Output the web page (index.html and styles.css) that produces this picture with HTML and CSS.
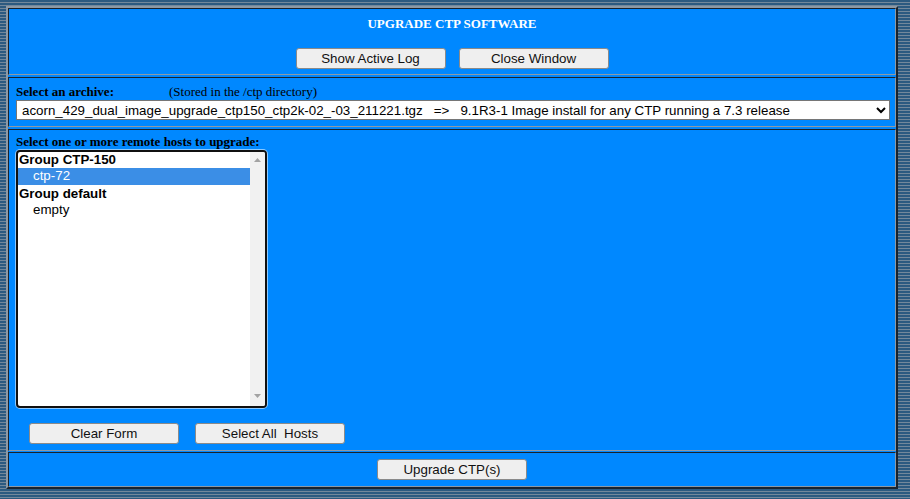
FILE: index.html
```html
<!DOCTYPE html>
<html lang="en">
<head>
<meta charset="utf-8">
<title>Upgrade CTP Software</title>
<link rel="stylesheet" href="styles.css">
</head>
<body>
<form class="frame">
  <section class="row row-head">
    <h1 class="title">UPGRADE CTP SOFTWARE</h1>
    <div class="btns btns-head">
      <button type="button" class="btn">Show Active Log</button>
      <button type="button" class="btn">Close Window</button>
    </div>
  </section>
  <section class="row row-archive">
    <div class="label-line"><b class="label-strong label-archive">Select an archive:</b><span class="note">(Stored in the /ctp directory)</span></div>
    <select class="archive">
      <option>acorn_429_dual_image_upgrade_ctp150_ctp2k-02_-03_211221.tgz&nbsp;&nbsp;&nbsp;=&gt;&nbsp;&nbsp;&nbsp;9.1R3-1 Image install for any CTP running a 7.3 release</option>
    </select>
  </section>
  <section class="row row-hosts">
    <div class="label-strong">Select one or more remote hosts to upgrade:</div>
    <div class="listbox" role="listbox" aria-multiselectable="true">
      <div class="options">
        <div class="opt-group first">Group CTP-150</div>
        <div class="opt selected" role="option" aria-selected="true">ctp-72</div>
        <div class="opt-group">Group default</div>
        <div class="opt" role="option">empty</div>
      </div>
      <div class="scrollbar">
        <svg class="arrow" width="7" height="4" viewBox="0 0 7 4"><polygon points="0,4 7,4 3.5,0" fill="#a3a3a3"/></svg>
        <svg class="arrow" width="7" height="4" viewBox="0 0 7 4"><polygon points="0,0 7,0 3.5,4" fill="#a3a3a3"/></svg>
      </div>
    </div>
    <div class="btns btns-hosts">
      <button type="button" class="btn">Clear Form</button>
      <button type="button" class="btn">Select All&nbsp; Hosts</button>
    </div>
  </section>
  <section class="row row-submit">
    <button type="button" class="btn">Upgrade CTP(s)</button>
  </section>
</form>
</body>
</html>
```
FILE: styles.css
```css
html, body {
  margin: 0;
}
body {
  height: 499px;
  box-sizing: border-box;
  padding: 6px 0 0 6px;
  overflow: hidden;
  font-family: "Liberation Serif", "Times New Roman", serif;
  background: repeating-linear-gradient(to bottom, #2c5a80 0, #2c5a80 2px, #73889b 2px, #73889b 3px);
}
.frame {
  width: 892px;
  height: 483px;
  box-sizing: border-box;
  margin: 0;
  border: 2px solid;
  border-color: #8d99a5 #18232e #18232e #8d99a5;
  background: #0088ff;
  display: flex;
  flex-direction: column;
}
.row {
  box-sizing: border-box;
  border: 1px solid;
  border-color: #18232e #8d99a5 #8d99a5 #18232e;
}
.row-head {
  height: 67px;
  margin-bottom: 2px;
  padding-top: 7px;
}
.row-archive {
  height: 50px;
  margin-bottom: 2px;
  padding: 6px 0 0 7px;
}
.row-hosts {
  height: 322px;
  margin-bottom: 1px;
  padding: 4px 0 0 7px;
}
.row-submit {
  height: 35px;
  padding-top: 6px;
  display: flex;
  justify-content: center;
}
.title {
  margin: 0;
  font-size: 13px;
  line-height: 15px;
  font-weight: bold;
  color: #ffffff;
  text-align: center;
}
.btns {
  display: flex;
}
.btns-head {
  justify-content: center;
  gap: 13px;
  margin-top: 17px;
}
.btns-hosts {
  gap: 16px;
  margin: 15px 0 0 13px;
}
.btn {
  box-sizing: border-box;
  width: 150px;
  height: 21px;
  margin: 0;
  padding: 0 6px;
  background: #efefef;
  border: 1px solid #8a8a8a;
  border-radius: 3px;
  font-family: "Liberation Sans", Arial, sans-serif;
  font-size: 13.33px;
  line-height: 19px;
  color: #111111;
  white-space: nowrap;
}
.label-line {
  font-size: 13px;
  line-height: 15px;
  color: #000;
}
.label-strong {
  font-size: 13px;
  line-height: 15px;
  font-weight: bold;
  color: #000;
}
.label-archive {
  display: inline-block;
  width: 153px;
}
.note {
  font-weight: normal;
}
.archive {
  display: block;
  box-sizing: border-box;
  width: 874px;
  height: 20px;
  margin-top: 1px;
  padding: 0 0 0 1px;
  font-family: "Liberation Sans", Arial, sans-serif;
  font-size: 13.33px;
  color: #000;
  background: #ffffff;
  border: 1px solid #767676;
  border-radius: 0;
}
.listbox {
  box-sizing: border-box;
  width: 251px;
  height: 258px;
  margin-top: 1px;
  border: 2px solid #101010;
  border-radius: 4px;
  box-shadow: 0 0 0 1px rgba(255, 255, 255, 0.55);
  background: #ffffff;
  display: flex;
  overflow: hidden;
  font-family: "Liberation Sans", Arial, sans-serif;
  font-size: 13.33px;
  color: #000;
}
.options {
  flex: 1;
}
.opt-group {
  height: 17px;
  line-height: 17px;
  padding-left: 1px;
  font-weight: bold;
}
.opt-group.first {
  height: 16px;
  line-height: 15px;
}
.opt {
  height: 17px;
  line-height: 16px;
  padding-left: 15px;
}
.opt.selected {
  background: #3b8ee6;
  color: #ffffff;
}
.scrollbar {
  width: 15px;
  background: #f1f1f1;
  display: flex;
  flex-direction: column;
  justify-content: space-between;
  align-items: center;
  padding: 6px 0 8px;
  box-sizing: border-box;
}
.arrow {
  display: block;
}
```
